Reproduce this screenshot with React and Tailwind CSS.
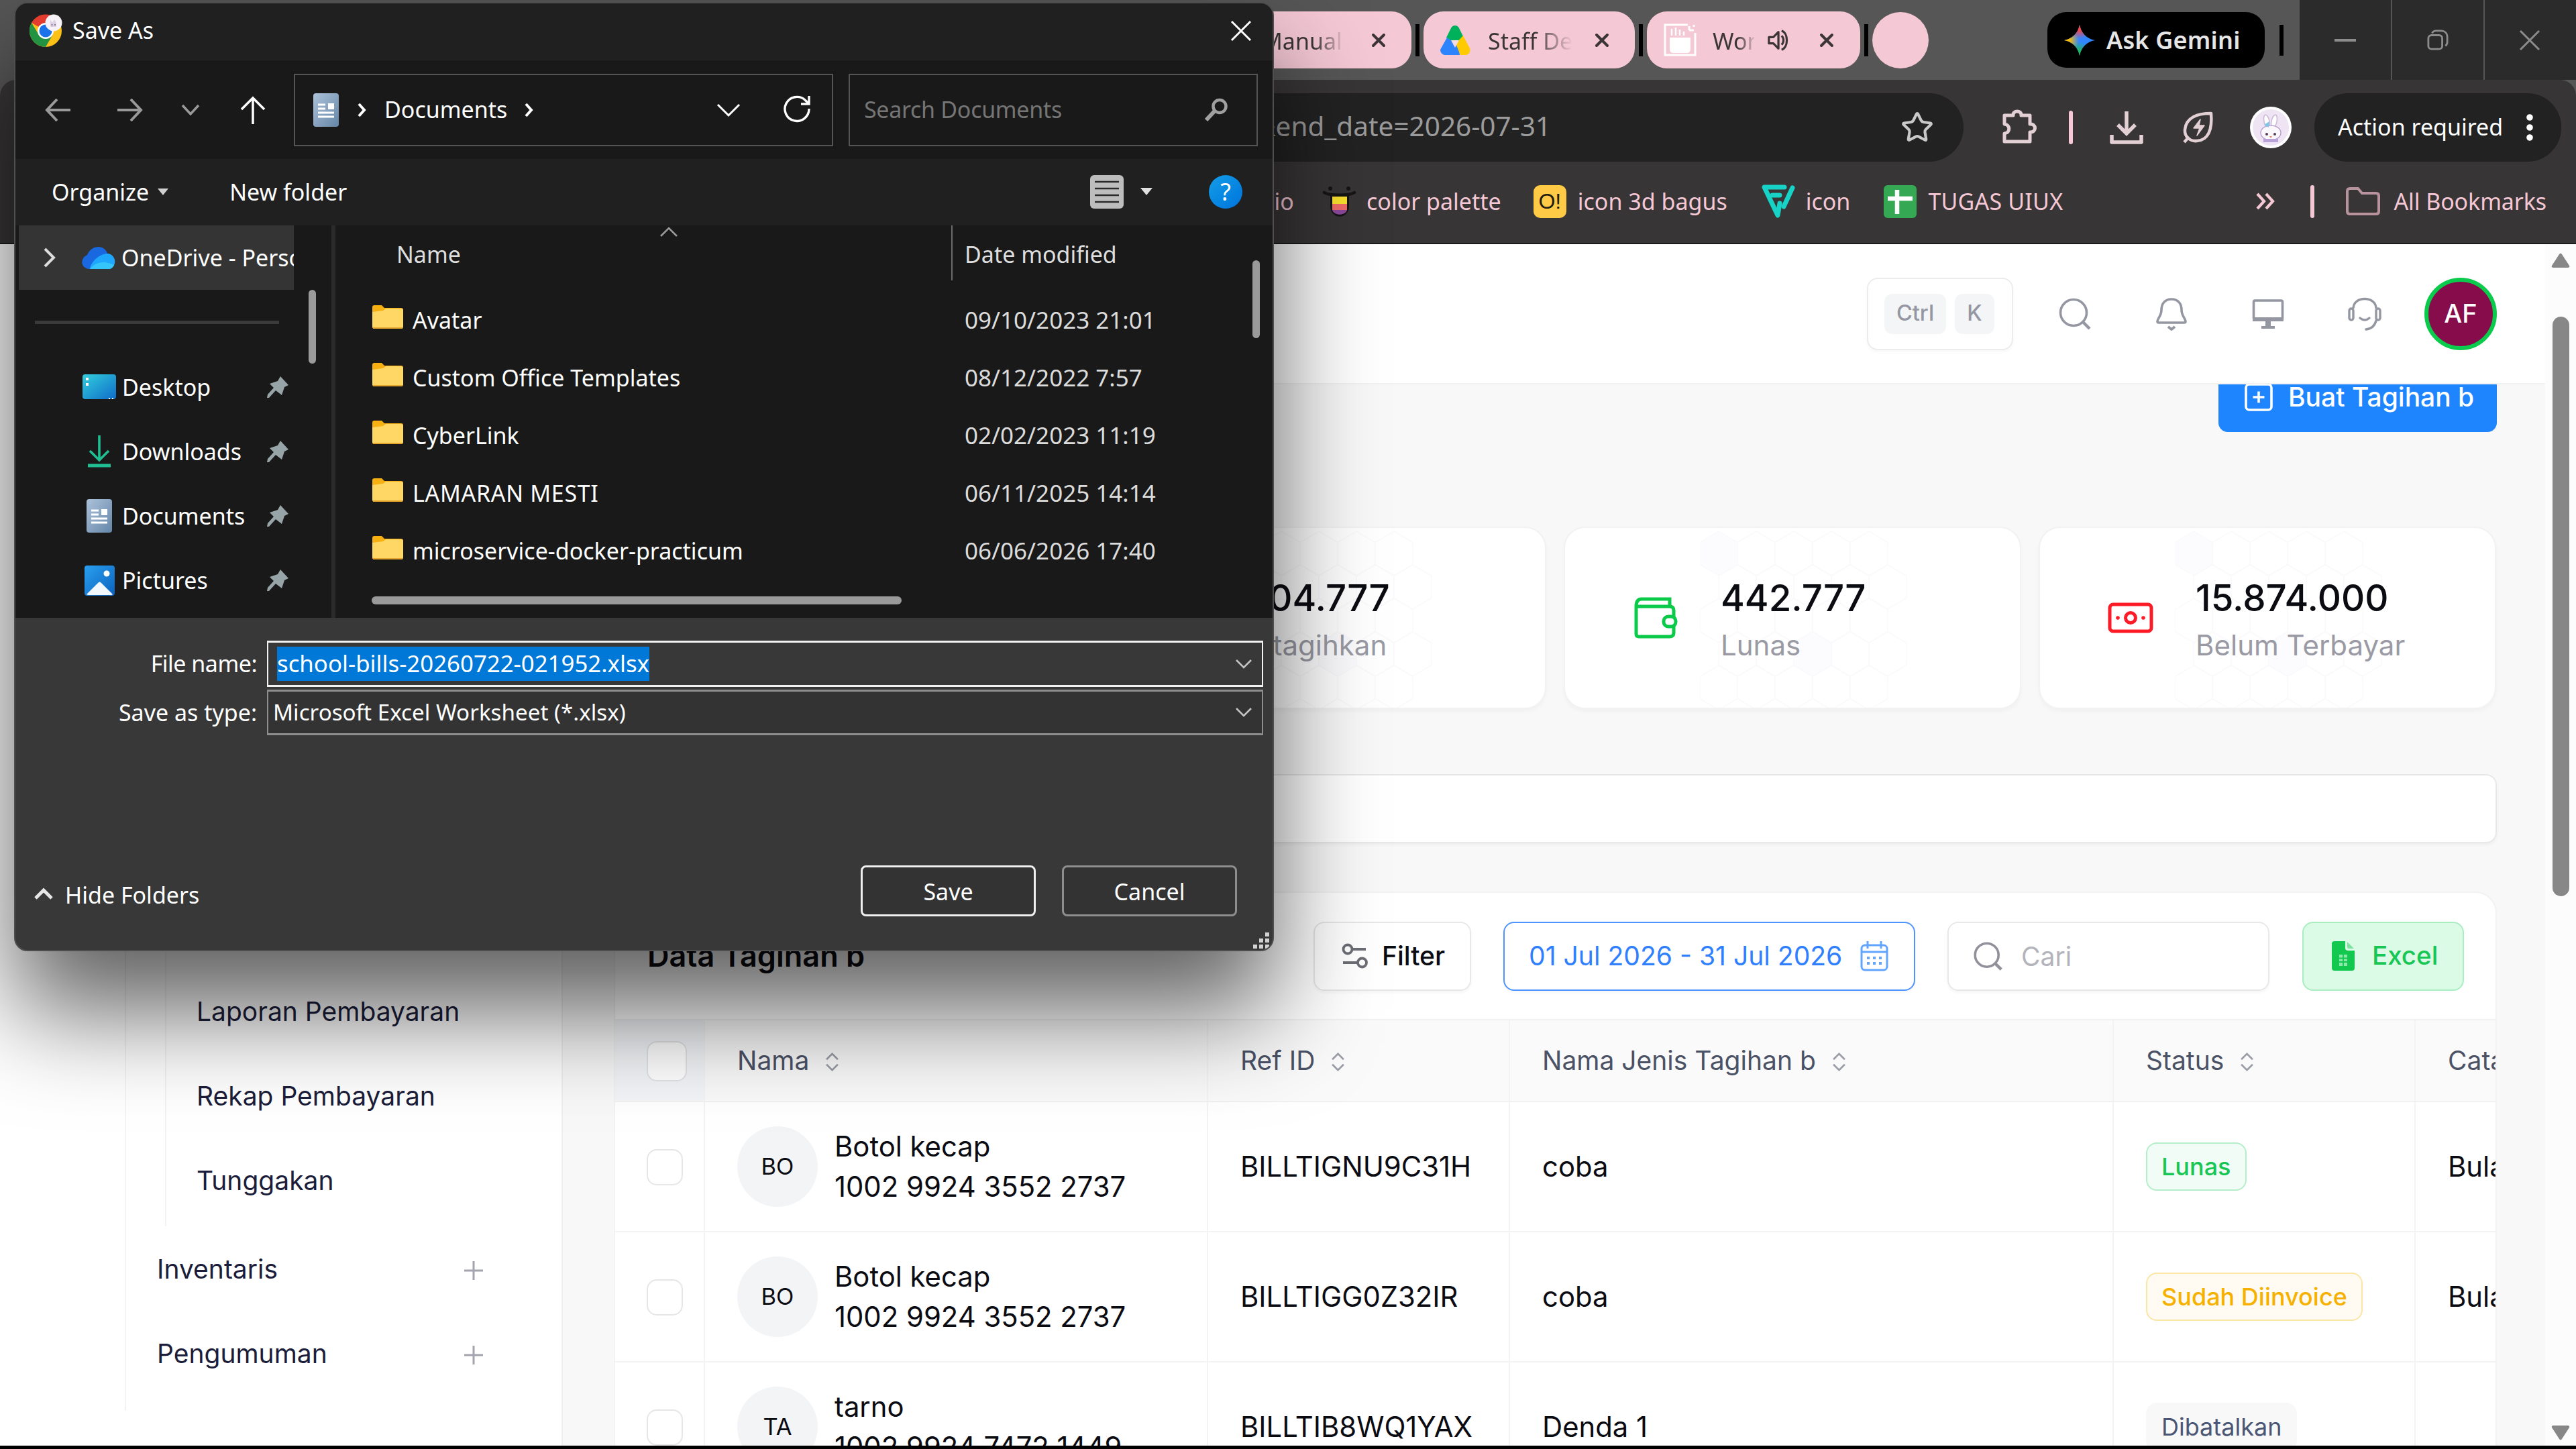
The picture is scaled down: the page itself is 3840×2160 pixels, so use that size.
import { Star, X } from "lucide-react";

const FOLDERS = [
    { name: "Avatar", date: "09/10/2023 21:01" },
    { name: "Custom Office Templates", date: "08/12/2022 7:57" },
    { name: "CyberLink", date: "02/02/2023 11:19" },
    { name: "LAMARAN MESTI", date: "06/11/2025 14:14", tracking: "tracking-[0.7px]" },
    { name: "microservice-docker-practicum", date: "06/06/2026 17:40" },
];

const PINNED = [
    { name: "Desktop", icon: DesktopIcon },
    { name: "Downloads", icon: DownloadsIcon },
    { name: "Documents", icon: DocumentIcon },
    { name: "Pictures", icon: PicturesIcon },
];

const BILLS = [
    { initials: "BO", name: "Botol kecap", va: "1002 9924 3552 2737", ref: "BILLTIGNU9C31H", type: "coba", status: "Lunas", note: "Bulanan" },
    { initials: "BO", name: "Botol kecap", va: "1002 9924 3552 2737", ref: "BILLTIGG0Z32IR", type: "coba", status: "Sudah Diinvoice", note: "Bulanan" },
    { initials: "TA", name: "tarno", va: "1002 9924 7472 1449", ref: "BILLTIB8WQ1YAX", type: "Denda 1", status: "Dibatalkan", note: "" },
];

const STATUS_STYLE = {
    Lunas: "border-[#b5efc9] bg-[#f2fcf6] text-[#17c653] font-medium",
    "Sudah Diinvoice": "border-[#fbe6a6] bg-[#fffbf2] text-[#f6b100] font-medium",
    Dibatalkan: "border-[#f8f8f9] bg-[#f8f8f9] text-[#4b5675]",
};

export default function App() {
    return (
        <div className="relative flex h-[2160px] w-[3840px] flex-col overflow-hidden bg-[#565656] [font-family:'Noto_Sans',sans-serif]">
            <TabStrip />
            <div className="h-[243px] shrink-0 rounded-t-[24px] bg-[#383536]">
                <AddressBar />
                <BookmarksBar />
            </div>
            <div className="h-[2px] shrink-0 bg-[#1c1b1b]" />
            <Page />
            <div className="h-[5px] shrink-0 bg-black" />
            <SaveDialog />
        </div>
    );
}

/* ---------- browser chrome ---------- */

function TabStrip() {
    return (
        <div className="flex h-[119px] shrink-0 items-start justify-between">
            <div className="flex items-center pl-[1780px] pt-[17px] text-[34px] text-[#3b3538]">
                <div className="flex h-[85px] w-[324px] items-center rounded-[30px] bg-[#f4c8d4] pl-[101px]">
                    <span className="mt-1 w-[130px] overflow-hidden whitespace-nowrap [mask-image:linear-gradient(90deg,#000_60%,transparent_95%)]">Manual</span>
                    <X className="ml-[28px] size-[32px]" strokeWidth={3} />
                </div>
                <TabDivider />
                <div className="flex h-[85px] w-[315px] items-center rounded-[30px] bg-[#f4c8d4] pl-[24px]">
                    <DriveIcon />
                    <span className="ml-[26px] mt-1 w-[126px] overflow-hidden whitespace-nowrap [mask-image:linear-gradient(90deg,#000_55%,transparent_100%)]">Staff De</span>
                    <X className="ml-[28px] size-[32px]" strokeWidth={3} />
                </div>
                <TabDivider />
                <div className="flex h-[85px] w-[318px] items-center rounded-[30px] bg-[#f4c8d4] pl-[25px]">
                    <PageIcon />
                    <span className="ml-[23px] mt-1 w-[62px] overflow-hidden whitespace-nowrap [mask-image:linear-gradient(90deg,#000_60%,transparent_105%)]">Wor</span>
                    <svg className="ml-[19px] h-[34px] w-[36px]" viewBox="0 0 36 36" fill="none" stroke="#3b3538" strokeWidth="3.4">
                        <path d="M2 13h7l8-8v26l-8-8H2z" strokeLinejoin="round" />
                        <path d="M22 11c4 3.500 4 10.500 0 14" />
                        <path d="M22 3c11 4 11 26 0 30" />
                    </svg>
                    <X className="ml-[37px] size-[32px]" strokeWidth={3} />
                </div>
                <TabDivider />
                <div className="size-[84px] rounded-full bg-[#f4c8d4]" />
            </div>
            <div className="flex">
                <div className="mt-[18px] flex h-[83px] w-[324px] items-center rounded-[28px] bg-black pl-[25px] text-white">
                    <GeminiIcon />
                    <span className="ml-[17px] whitespace-nowrap text-[36px] font-semibold leading-[81px] tracking-[0.2px] text-[#e6e6e6]">Ask Gemini</span>
                </div>
                <div className="ml-[22px] mr-[24px] mt-[37px] h-[46px] w-[6px] bg-black" />
                <div className="flex h-[119px] w-[412px] bg-[#2b2b2b] text-[#8c8c8c]">
                    <div className="flex w-[138px] items-center justify-center border-r-2 border-[#565656]">
                        <div className="h-[4px] w-[32px] bg-[#8c8c8c]" />
                    </div>
                    <div className="flex w-[138px] items-center justify-center border-r-2 border-[#565656]">
                        <svg className="size-[32px]" viewBox="0 0 34 34" fill="none" stroke="currentColor" strokeWidth="3">
                            <rect x="2" y="9" width="22" height="22" rx="5" />
                            <path d="M8 6c1-2.500 3-4 6-4h8c6 0 10 4 10 10v8c0 3-1 4.500-3 6" />
                        </svg>
                    </div>
                    <div className="flex w-[134px] items-center justify-center">
                        <XMark className="size-[32px]" width={3} />
                    </div>
                </div>
            </div>
        </div>
    );
}

function TabDivider() {
    return <div className="mx-[6px] h-[48px] w-[6px] bg-black" />;
}

function XMark({ className, width }) {
    return (
        <svg className={className} viewBox="0 0 32 32" stroke="currentColor" strokeWidth={width}>
            <path d="M2 2L30 30M30 2L2 30" />
        </svg>
    );
}

function AddressBar() {
    return (
        <div className="flex h-[142px] items-center text-[#e3d0d5]">
            <div className="ml-[400px] flex h-[102px] w-[2527px] items-center justify-end rounded-full bg-[#222222] pr-[44px]">
                <span className="mr-[521px] whitespace-nowrap pb-[3px] text-[40.5px] text-[#9b9b9b]">&amp;end_date=2026-07-31</span>
                <Star className="size-[50px] text-[#c9c9c9]" strokeWidth={2} />
            </div>
            <svg className="ml-[55px] h-[56px] w-[56px]" viewBox="0 0 56 56" fill="none" stroke="currentColor" strokeWidth="5" strokeLinejoin="round">
                <path d="M6 10H19C18 2 32 2 31 10H44V23C54 22 54 36 44 35V49H6V37C15 36 15 24 6 23Z" />
            </svg>
            <div className="ml-[46px] h-[50px] w-[6px] rounded-full bg-[#f4c8d4]" />
            <svg className="ml-[54px] h-[52px] w-[52px]" viewBox="0 0 52 52" fill="none" stroke="currentColor" strokeWidth="5.500">
                <path d="M26 2V34M13 22L26 35L39 22" />
                <path d="M4 37V48H48V37" strokeLinejoin="round" />
            </svg>
            <svg className="ml-[56px] h-[50px] w-[50px]" viewBox="0 0 50 50" fill="none" stroke="currentColor" strokeWidth="4.500" strokeLinejoin="round">
                <path d="M44 4C24 4 7 10 5 28C4 40 14 46 23 45C40 44 46 28 44 4Z" />
                <path d="M11 39L4 47" />
                <path d="M28 13L18 26H27L23 37L34 22H26Z" fill="currentColor" strokeWidth="1.500" />
            </svg>
            <BunnyAvatar />
            <div className="ml-[34px] flex h-[102px] w-[368px] items-center rounded-[50px] bg-[#222222] pl-[35px] text-white">
                <span className="whitespace-nowrap pb-[2px] text-[34px]">Action required</span>
                <svg className="ml-[35px] h-[42px] w-[10px]" viewBox="0 0 10 42" fill="currentColor">
                    <circle cx="5" cy="6" r="4.800" />
                    <circle cx="5" cy="21" r="4.800" />
                    <circle cx="5" cy="36" r="4.800" />
                </svg>
            </div>
        </div>
    );
}

function BookmarksBar() {
    return (
        <div className="flex h-[78px] items-center whitespace-nowrap text-[34px] text-[#f4c8d4]">
            <span className="ml-[1770px] w-[151px] text-right">portofolio</span>
            <svg className="ml-[50px] h-[50px] w-[52px]" viewBox="0 0 52 50">
                <circle cx="12" cy="6" r="3" fill="#161414" />
                <circle cx="39" cy="6" r="3" fill="#161414" />
                <path d="M3 12C10 17 41 17 48 12" stroke="#161414" strokeWidth="4.500" fill="none" strokeLinecap="round" />
                <path d="M12 16H40V32C40 53 12 53 12 32Z" fill="#161414" />
                <path d="M15 18H37V30H15Z" fill="#fbe32d" />
                <path d="M15 29H37V38H15Z" fill="#f46a6a" />
                <path d="M15 38H37C35 47 17 47 15 38Z" fill="#8b4a9c" />
            </svg>
            <span className="ml-[14px]">color palette</span>
            <span className="ml-[48px] flex size-[49px] items-center justify-center rounded-[10px] bg-[#ffca45] [font-family:'Liberation_Sans',sans-serif] text-[32px] text-[#211c12]">O!</span>
            <span className="ml-[17px]">icon 3d bagus</span>
            <svg className="ml-[51px] h-[50px] w-[50px]" viewBox="0 0 50 50" fill="none" stroke="#17d3c7" strokeWidth="7" strokeLinejoin="round" strokeLinecap="round">
                <path d="M34 4H4L24 46L27 28" />
                <path d="M16 16H27" />
                <path d="M46 5L33 33" />
            </svg>
            <span className="ml-[16px]">icon</span>
            <svg className="ml-[50px] h-[49px] w-[49px]" viewBox="0 0 49 49">
                <rect width="49" height="49" rx="6" fill="#34a853" />
                <path d="M20 7V43M6 20H43" stroke="#fff" strokeWidth="6.500" />
            </svg>
            <span className="ml-[17px] tracking-[0.2px]">TUGAS UIUX</span>
            <svg className="ml-auto h-[26px] w-[31px]" viewBox="0 0 31 26" fill="none" stroke="currentColor" strokeWidth="4.200">
                <path d="M3 2L13 13L3 24M16 2L26 13L16 24" />
            </svg>
            <div className="ml-[51px] h-[49px] w-[6px] rounded-full bg-[#f4c8d4]" />
            <svg className="ml-[47px] h-[42px] w-[51px]" viewBox="0 0 51 42" fill="none" stroke="#b8939d" strokeWidth="4">
                <path d="M2 36V6Q2 2 6 2H18L24 9H45Q49 9 49 13V36Q49 40 45 40H6Q2 40 2 36Z" />
            </svg>
            <span className="ml-[20px] mr-[44px] tracking-[-0.1px]">All Bookmarks</span>
        </div>
    );
}

function DriveIcon() {
    return (
        <svg className="h-[46px] w-[46px] shrink-0" viewBox="0 0 46 46">
            <path d="M10 19L17 5Q19 1 23 1T29 5L35 17L27 27L17 24Z" fill="#00b15b" />
            <path d="M11 19L22 26L15 45H7Q1 43 1 37Z" fill="#2d84fc" />
            <path d="M11 45L19 30H28L30 45Z" fill="#2d84fc" />
            <path d="M35 16L45 35Q47 42 40 45H31L24 28Z" fill="#ffcb00" />
            <path d="M17 23H29L23 34Z" fill="#f4dce2" />
        </svg>
    );
}

function PageIcon() {
    return (
        <svg className="h-[50px] w-[50px] shrink-0" viewBox="0 0 50 50" fill="none" stroke="#fff" strokeWidth="3">
            <path d="M36 2H2V47H47V14" />
            <path d="M38 10V4M38 10H45M45 2V5" />
            <path d="M9 21H40V38Q40 44 34 44H15Q9 44 9 38Z" fill="#fff" stroke="none" />
            <path d="M12 8V18M18 6V18M24 9V18M30 12V18" strokeWidth="2.500" />
        </svg>
    );
}

function GeminiIcon() {
    return (
        <svg className="h-[46px] w-[46px] shrink-0" viewBox="0 0 46 46">
            <defs>
                <radialGradient id="gem-red" cx="23" cy="2" r="19" gradientUnits="userSpaceOnUse">
                    <stop offset="0.300" stopColor="#f94543" />
                    <stop offset="1" stopColor="#f94543" stopOpacity="0" />
                </radialGradient>
                <radialGradient id="gem-yellow" cx="2" cy="23" r="20" gradientUnits="userSpaceOnUse">
                    <stop offset="0.300" stopColor="#fbbc04" />
                    <stop offset="1" stopColor="#fbbc04" stopOpacity="0" />
                </radialGradient>
                <radialGradient id="gem-green" cx="21" cy="45" r="20" gradientUnits="userSpaceOnUse">
                    <stop offset="0.300" stopColor="#1fb75a" />
                    <stop offset="1" stopColor="#1fb75a" stopOpacity="0" />
                </radialGradient>
            </defs>
            {["#3186ff", "url(#gem-green)", "url(#gem-yellow)", "url(#gem-red)"].map((fill) => (
                <path key={fill} fill={fill} d="M23 0C25 12 34 21 46 23C34 25 25 34 23 46C21 34 12 25 0 23C12 21 21 12 23 0Z" />
            ))}
        </svg>
    );
}

function BunnyAvatar() {
    return (
        <svg className="ml-[52px] size-[62px]" viewBox="0 0 62 62">
            <circle cx="31" cy="31" r="31" fill="#fff" />
            <circle cx="31" cy="31" r="27" fill="#eee4f3" />
            <ellipse cx="25" cy="22" rx="4" ry="10" fill="#fff" stroke="#cbb8d8" strokeWidth="1.500" transform="rotate(-12 25 22)" />
            <ellipse cx="36" cy="22" rx="4" ry="10" fill="#fff" stroke="#cbb8d8" strokeWidth="1.500" transform="rotate(12 36 22)" />
            <ellipse cx="31" cy="39" rx="15" ry="11" fill="#fbf8fd" stroke="#bca6d6" strokeWidth="1.500" />
            <circle cx="25" cy="41" r="2" fill="#54405e" />
            <circle cx="37" cy="41" r="2" fill="#54405e" />
            <path d="M29 44H33L31 47Z" fill="#e8876e" />
            <path d="M21 27L29 22L28 31Z" fill="#7cc6e6" />
            <path d="M20 48H42V53H20Z" fill="#b9a3d8" />
        </svg>
    );
}

/* ---------- page ---------- */

function Page() {
    return (
        <div className="flex min-h-0 flex-1 overflow-hidden bg-white text-[#0b0b12] [font-family:Inter,sans-serif]">
            <Sidebar />
            <div className="flex w-[2955px] flex-col bg-[#f8f8f8]">
                <Header />
                <main className="flex min-h-0 flex-1 flex-col overflow-hidden pl-[76px] pr-[72px]">
                    <div className="flex shrink-0 justify-end">
                        <div className="flex h-[71px] w-[415px] items-center rounded-b-[14px] bg-[#1f85ff] pb-[34px] pl-[39px] text-white">
                            <svg className="h-[42px] w-[42px] shrink-0" viewBox="0 0 42 42" fill="none" stroke="#fff" strokeWidth="3.600">
                                <rect x="2" y="2" width="38" height="38" rx="5" />
                                <path d="M21 12.500V29.500M12.500 21H29.500" />
                            </svg>
                            <span className="ml-[23px] whitespace-nowrap text-[39px] font-medium leading-[48px]">Buat Tagihan b</span>
                        </div>
                    </div>
                    <div className="mt-[141px] flex shrink-0 gap-[26px]">
                        <StatCard icon={<WalletIcon />} value="16" label="Jumlah" />
                        <StatCard icon={<WalletIcon />} value="304.777" label="Ditagihkan" />
                        <StatCard icon={<WalletIcon />} value="442.777" label="Lunas" />
                        <StatCard icon={<CashIcon />} value="15.874.000" label="Belum Terbayar" />
                    </div>
                    <div className="mt-[97px] h-[103px] shrink-0 rounded-[16px] border-2 border-[#e8e8e8] bg-white shadow-[0_3px_4px_rgba(0,0,0,0.04)]" />
                    <BillTable />
                </main>
            </div>
            <div className="flex w-[46px] flex-col items-center bg-[#fcfcfc] pt-[13px]">
                <svg className="h-[22px] w-[28px] shrink-0" viewBox="0 0 28 22" fill="#878787"><path d="M12 2Q14 -1 16 2L27 19Q28 22 25 22H3Q0 22 1 19Z" /></svg>
                <div className="mt-[73px] h-[864px] w-[25px] shrink-0 rounded-full bg-[#878787]" />
                <svg className="mb-[8px] mt-auto h-[22px] w-[28px] shrink-0" viewBox="0 0 28 22" fill="#878787"><path d="M12 20Q14 23 16 20L27 3Q28 0 25 0H3Q0 0 1 3Z" /></svg>
            </div>
        </div>
    );
}

function Sidebar() {
    return (
        <div className="w-[839px] shrink-0 border-r-2 border-[#f0f0f0] bg-white pl-[186px] pt-[800px] text-[39px] text-[#1b1d3a]">
            <div className="h-[939px] border-l-2 border-[#f3f3f3]">
                <div className="ml-[58px] flex h-[664px] flex-col justify-end border-l-2 border-[#f3f3f3] pb-[5px] pl-[45px]">
                    <span className="flex h-[126px] items-center">Laporan Pembayaran</span>
                    <span className="flex h-[126px] items-center">Rekap Pembayaran</span>
                    <span className="flex h-[126px] items-center">Tunggakan</span>
                </div>
                <SidebarGroup label="Inventaris" />
                <SidebarGroup label="Pengumuman" />
            </div>
        </div>
    );
}

function SidebarGroup({ label }) {
    return (
        <div className="flex h-[126px] w-[532px] items-center justify-between pl-[46px] pt-[2px]">
            <span>{label}</span>
            <svg className="mt-[3px] size-[28px]" viewBox="0 0 28 28" stroke="#a3a4ad" strokeWidth="3"><path d="M14 0V28M0 14H28" /></svg>
        </div>
    );
}

function Header() {
    return (
        <div className="flex h-[209px] shrink-0 items-center justify-end border-b-2 border-[#f1f1f1] bg-white pr-[72px] text-[#9496a1]">
            <div className="flex h-[108px] w-[218px] items-center gap-[13px] rounded-[16px] border-2 border-[#ececec] pl-[24px] shadow-[0_3px_4px_rgba(0,0,0,0.03)]">
                <span className="flex h-[60px] w-[92px] items-center justify-center rounded-[12px] bg-[#f3f5f7] text-[32.500px] font-medium">Ctrl</span>
                <span className="flex h-[60px] w-[59px] items-center justify-center rounded-[12px] bg-[#f3f5f7] text-[32.500px] font-medium">K</span>
            </div>
            <svg className="ml-[68px] size-[48px]" viewBox="0 0 48 48" fill="none" stroke="currentColor" strokeWidth="3.600">
                <circle cx="22" cy="22" r="19.500" />
                <path d="M36 36L46 46" strokeWidth="4.500" />
            </svg>
            <svg className="ml-[96px] h-[50px] w-[48px]" viewBox="0 0 48 50" fill="none" stroke="currentColor" strokeWidth="3.600" strokeLinejoin="round">
                <path d="M24 3C13 3 9 11 9 19C9 28 3 32 3 36Q3 38 5 38H43Q45 38 45 36C45 32 39 28 39 19C39 11 35 3 24 3Z" />
                <path d="M19 44L24 48L29 44" strokeWidth="4" />
            </svg>
            <svg className="ml-[96px] h-[46px] w-[48px]" viewBox="0 0 48 46" fill="none" stroke="currentColor">
                <rect x="2.500" y="3" width="43" height="28" rx="2" strokeWidth="3.600" />
                <path d="M1 28H47V34H1Z" fill="currentColor" stroke="none" />
                <path d="M20 33H28V41H34V45H14V41H20Z" fill="currentColor" stroke="none" />
            </svg>
            <svg className="ml-[95px] h-[50px] w-[50px]" viewBox="0 0 50 50" fill="none" stroke="currentColor" strokeWidth="3.400" strokeLinecap="round">
                <path d="M8 16C9 -2 41 -2 42 16" />
                <rect x="2" y="17" width="6" height="17" rx="3" />
                <rect x="42" y="17" width="6" height="17" rx="3" />
                <path d="M18 31Q25 37 32 31" />
                <path d="M42 35C40 43 35 47 27 48" />
            </svg>
            <div className="ml-[64px] flex size-[108px] items-center justify-center rounded-full border-[6px] border-[#0acb4b] bg-[#870c4b] text-[38px] font-medium text-white">AF</div>
        </div>
    );
}

function StatCard({ icon, value, label }) {
    return (
        <div className="flex h-[272px] w-[682px] shrink-0 items-center rounded-[32px] border-2 border-[#f2f2f2] bg-white shadow-[0_4px_6px_rgba(0,0,0,0.03)]">
            <div className="ml-[97px] flex h-full w-[76px] items-center justify-center">{icon}</div>
            <div className="relative flex h-full flex-1 flex-col pl-[59px] pt-[71px]">
                <Honeycomb />
                <span className="relative whitespace-nowrap text-[54.600px] font-medium leading-[66px]">{value}</span>
                <span className="relative mt-[9px] whitespace-nowrap text-[42px] leading-[58px] text-[#9a9aa4]">{label}</span>
            </div>
        </div>
    );
}

function Honeycomb() {
    const cells = [];
    for (let row = 0; row < 5; row++) {
        for (let col = 0; col < 5; col++) {
            cells.push({ x: 28 + col * 56 + (row % 2) * 28, y: 34 + row * 50, filled: (row === 0 && col === 0) || (row === 3 && col === 2) });
        }
    }
    return (
        <svg className="absolute left-[28px] top-[4px] h-[264px] w-[330px]" viewBox="0 0 330 264" fill="none" stroke="#fafafc" strokeWidth="1.500">
            {cells.map(({ x, y, filled }) => (
                <path key={x + "-" + y} d={`M${x} ${y - 33}l28 16.500v33l-28 16.500l-28 -16.500v-33z`} fill={filled ? "#fcfcfe" : "none"} />
            ))}
        </svg>
    );
}

function WalletIcon() {
    return (
        <svg className="h-[62px] w-[66px]" viewBox="0 0 66 62" fill="none" stroke="#0bca4a" strokeWidth="5">
            <path d="M4 14Q4 3 12 3H54V14" />
            <path d="M4 14V55Q4 59 8 59H54Q60 59 60 53V20Q60 14 54 14H4" />
            <rect x="45" y="29" width="18" height="15" rx="7" fill="#fff" />
        </svg>
    );
}

function CashIcon() {
    return (
        <svg className="h-[46px] w-[68px]" viewBox="0 0 68 46" fill="none" stroke="#fc1c27" strokeWidth="5">
            <rect x="3" y="3" width="62" height="40" rx="5" />
            <circle cx="34" cy="23" r="7.500" />
            <circle cx="15" cy="23" r="2.800" fill="#fc1c27" stroke="none" />
            <circle cx="53" cy="23" r="2.800" fill="#fc1c27" stroke="none" />
        </svg>
    );
}

function BillTable() {
    return (
        <div className="mt-[72px] h-[900px] shrink-0 overflow-hidden rounded-t-[32px] border-2 border-[#f2f2f2] bg-white">
            <div className="flex h-[188px] items-center pl-[48px] pr-[47px]">
                <span className="whitespace-nowrap text-[45px] font-semibold">Data Tagihan b</span>
                <button className="ml-auto flex h-[103px] w-[235px] items-center rounded-[16px] border-2 border-[#e8e8e8] pl-[40px] shadow-[0_3px_4px_rgba(0,0,0,0.04)]">
                    <svg className="h-[38px] w-[40px]" viewBox="0 0 40 38" fill="none" stroke="#6c6d75" strokeWidth="3.800">
                        <circle cx="9" cy="9" r="6.500" />
                        <path d="M16 9H36M2 29H24" />
                        <circle cx="30.500" cy="29" r="6.500" />
                    </svg>
                    <span className="ml-[20px] text-[39px] font-medium">Filter</span>
                </button>
                <button className="ml-[48px] flex h-[103px] w-[614px] items-center rounded-[16px] border-2 border-[#4d94ff] pl-[36px] text-[#2f7fff] shadow-[0_3px_4px_rgba(0,0,0,0.03)]">
                    <span className="whitespace-nowrap text-[39.100px]">01 Jul 2026 - 31 Jul 2026</span>
                    <CalendarIcon />
                </button>
                <div className="ml-[48px] flex h-[103px] w-[480px] items-center rounded-[16px] border-2 border-[#e8e8e8] pl-[37px] text-[#8f909a] shadow-[0_3px_4px_rgba(0,0,0,0.04)]">
                    <svg className="size-[43px]" viewBox="0 0 48 48" fill="none" stroke="currentColor" strokeWidth="4">
                        <circle cx="22" cy="22" r="19.500" />
                        <path d="M36 36L46 46" strokeWidth="5" />
                    </svg>
                    <span className="ml-[28px] pt-[2px] text-[39px] text-[#b3b3bb]">Cari</span>
                </div>
                <button className="ml-[49px] flex h-[103px] w-[241px] items-center rounded-[16px] border-2 border-[#a9edc1] bg-[#dcfbe7] pl-[41px] text-[#17c653]">
                    <svg className="h-[44px] w-[36px]" viewBox="0 0 36 44">
                        <path d="M5 0H21V10Q21 14 25 14H35V40Q35 44 31 44H5Q1 44 1 40V4Q1 0 5 0Z" fill="#12c84f" />
                        <path d="M24 1L34 11H26Q24 11 24 9Z" fill="#7fe3a0" />
                        <path d="M12 20H24V37H12Z" fill="#8be8a9" />
                        <path d="M18 20V37M12 25.500H24M12 31H24" stroke="#12c84f" strokeWidth="1.800" />
                    </svg>
                    <span className="ml-[25px] text-[38.500px] font-medium">Excel</span>
                </button>
            </div>
            <div className="grid h-[124px] grid-cols-[134px_750px_450px_900px_450px_300px] border-y-2 border-[#f1f1f1] bg-[#fafafa] text-[39px] text-[#4b5266]">
                <div className="flex items-center border-r-2 border-[#f3f3f3] bg-[#f3f5f8] pl-[47px] pt-[2px]">
                    <span className="size-[60px] rounded-[15px] border-2 border-[#e2e3e6] bg-white" />
                </div>
                <HeadCell label="Nama" />
                <HeadCell label="Ref ID" />
                <HeadCell label="Nama Jenis Tagihan b" />
                <HeadCell label="Status" />
                <div className="flex items-center pl-[48px]">Catatan</div>
            </div>
            {BILLS.map((bill, i) => (
                <div key={i} className="grid h-[194px] grid-cols-[134px_750px_450px_900px_450px_300px] border-b-2 border-[#f3f3f3] text-[41.8px]">
                    <div className="flex items-center border-r-2 border-[#f3f3f3] pl-[47px] pt-[2px]">
                        <span className="size-[54px] rounded-[15px] border-2 border-[#e6e6e8] bg-white" />
                    </div>
                    <div className="flex items-center border-r-2 border-[#f3f3f3] pl-[48px]">
                        <span className="flex size-[120px] items-center justify-center rounded-full bg-[#f2f4f6] text-[34.5px]">{bill.initials}</span>
                        <span className="ml-[25px] flex flex-col leading-[60px]">
                            <span>{bill.name}</span>
                            <span className="whitespace-nowrap">{bill.va}</span>
                        </span>
                    </div>
                    <div className="flex items-center border-r-2 border-[#f3f3f3] pl-[48px]">{bill.ref}</div>
                    <div className="flex items-center border-r-2 border-[#f3f3f3] pl-[48px]">{bill.type}</div>
                    <div className="flex items-center border-r-2 border-[#f3f3f3] pl-[48px]">
                        <span className={`flex h-[72px] items-center whitespace-nowrap rounded-[16px] border-2 px-[21px] text-[36px] ${STATUS_STYLE[bill.status]}`}>{bill.status}</span>
                    </div>
                    <div className="flex items-center pl-[48px]">{bill.note}</div>
                </div>
            ))}
        </div>
    );
}

function HeadCell({ label }) {
    return (
        <div className="flex items-center border-r-2 border-[#f3f3f3] pl-[48px]">
            <span className="whitespace-nowrap">{label}</span>
            <svg className="ml-[24px] mt-[3px] h-[28px] w-[21px]" viewBox="0 0 22 30" fill="none" stroke="#9a9da8" strokeWidth="2.800">
                <path d="M2 11L11 2L20 11M2 19L11 28L20 19" />
            </svg>
        </div>
    );
}

function CalendarIcon() {
    return (
        <svg className="ml-[27px] h-[46px] w-[42px]" viewBox="0 0 42 46" fill="none" stroke="#61a5ff" strokeWidth="3">
            <rect x="2" y="7" width="38" height="37" rx="5" />
            <path d="M2 17H40M11 1V12M31 1V12" />
            <path d="M10 26H32M10 34H32" strokeWidth="4" strokeDasharray="4 5" />
        </svg>
    );
}

/* ---------- save dialog ---------- */

function SaveDialog() {
    return (
        <div className="absolute left-[21px] top-[3px] flex h-[1415px] w-[1878px] flex-col overflow-hidden rounded-[20px] border-2 border-[#4e4e4e] bg-[#383838] text-[34px] text-white shadow-[0_90px_150px_rgba(0,0,0,0.62)]">
            <div className="flex h-[85px] shrink-0 items-center bg-[#202020] pb-[4px] pl-[20px] pr-[31px]">
                <ChromeIcon />
                <span className="ml-[15px]">Save As</span>
                <XMark className="ml-auto size-[32px]" width={3} />
            </div>
            <DialogNav />
            <DialogToolbar />
            <div className="flex h-[585px] shrink-0 bg-[#191919]">
                <DialogTree />
                <DialogFiles />
            </div>
            <DialogForm />
        </div>
    );
}

function DialogNav() {
    return (
        <div className="flex h-[147px] shrink-0 items-center bg-[#191919]">
            <svg className="ml-[44px] h-[40px] w-[40px]" viewBox="0 0 40 40" fill="none" stroke="#9a9a9a" strokeWidth="4"><path d="M38 20H4M18 4L3 20L18 36" /></svg>
            <svg className="ml-[66px] h-[40px] w-[40px]" viewBox="0 0 40 40" fill="none" stroke="#9a9a9a" strokeWidth="4"><path d="M2 20H36M22 4L37 20L22 36" /></svg>
            <svg className="ml-[57px] h-[20px] w-[28px]" viewBox="0 0 28 20" fill="none" stroke="#9a9a9a" strokeWidth="3.500"><path d="M2 3L14 16L26 3" /></svg>
            <svg className="ml-[59px] h-[42px] w-[40px]" viewBox="0 0 40 42" fill="none" stroke="#fff" strokeWidth="3.500"><path d="M20 42V4M3 20L20 3L37 20" /></svg>
            <div className="ml-[41px] flex h-[108px] w-[804px] items-center border-2 border-[#555555] pl-[27px]">
                <DocumentIcon />
                <Chevron className="ml-[27px]" />
                <span className="ml-[26px]">Documents</span>
                <Chevron className="ml-[25px]" />
                <svg className="ml-auto h-[22px] w-[36px]" viewBox="0 0 36 22" fill="none" stroke="#fff" strokeWidth="3"><path d="M2 3L18 19L34 3" /></svg>
                <svg className="ml-[63px] mr-[31px] mt-[-4px] h-[42px] w-[42px]" viewBox="0 0 42 42" fill="none" stroke="#fff" strokeWidth="3.400">
                    <path d="M39 21A18 18 0 1 1 33 8L38 13" />
                    <path d="M39 2V14H27" />
                </svg>
            </div>
            <div className="ml-[23px] flex h-[108px] w-[610px] items-center justify-between border-2 border-[#555555] pl-[21px] pr-[42px] text-[#757575]">
                <span className="tracking-[-0.300px]">Search Documents</span>
                <svg className="h-[36px] w-[36px]" viewBox="0 0 36 36" fill="none" stroke="#a0a0a0" strokeWidth="4.500">
                    <circle cx="23" cy="12.500" r="9.500" />
                    <path d="M16 19L3 33" strokeWidth="6" />
                </svg>
            </div>
        </div>
    );
}

function Chevron({ className }) {
    return (
        <svg className={`h-[22px] w-[15px] ${className}`} viewBox="0 0 15 22" fill="none" stroke="#fff" strokeWidth="4">
            <path d="M3 2L11 11L3 20" />
        </svg>
    );
}

function DialogToolbar() {
    return (
        <div className="flex h-[99px] shrink-0 items-center bg-[#202020] pb-[2px]">
            <span className="ml-[54px] mt-[2px]">Organize</span>
            <div className="ml-[13px] h-0 w-0 border-x-[8px] border-t-[10px] border-x-transparent border-t-[#d0d0d0]" />
            <span className="ml-[91px] mt-[2px]">New folder</span>
            <svg className="ml-auto h-[50px] w-[50px]" viewBox="0 0 50 50">
                <rect width="50" height="50" rx="6" fill="#bdbdbd" />
                <path d="M7 10H43M7 20H43M7 30H43M7 40H43" stroke="#2a2a2a" strokeWidth="2.600" />
            </svg>
            <div className="ml-[25px] h-0 w-0 border-x-[9px] border-t-[11px] border-x-transparent border-t-[#e0e0e0]" />
            <span className="ml-[84px] mr-[45px] flex size-[50px] items-center justify-center rounded-full bg-linear-to-br from-[#159de8] to-[#0273dc] text-[36px]">?</span>
        </div>
    );
}

function DialogTree() {
    return (
        <div className="relative w-[477px] shrink-0 border-r-[6px] border-[#2b2b2b] pl-[5px]">
            <div className="flex h-[96px] w-[410px] items-center overflow-hidden bg-[#343434] pl-[36px]">
                <svg className="h-[30px] w-[20px] shrink-0" viewBox="0 0 20 30" fill="none" stroke="#ddd" strokeWidth="4"><path d="M3 2L16 15L3 28" /></svg>
                <svg className="ml-[38px] h-[36px] w-[50px] shrink-0" viewBox="0 0 50 36">
                    <path d="M10 35C-2 33 -3 19 8 14C13 0 32 -3 38 11L25 35Z" fill="#1a68e0" />
                    <path d="M12 35C14 22 28 12 39 12C52 14 53 33 40 35Z" fill="#1ea7fd" />
                    <path d="M12 35C20 24 34 22 48 29C46 33 44 35 40 35Z" fill="#35c5fb" />
                </svg>
                <span className="ml-[9px] whitespace-nowrap">OneDrive - Personal</span>
            </div>
            <div className="flex h-[97px] items-center pl-[24px]">
                <div className="h-[5px] w-[364px] bg-[#3a3a3a]" />
            </div>
            {PINNED.map(({ name, icon: Icon }) => (
                <div key={name} className="flex h-[96px] items-center pl-[90px]">
                    <span className="flex w-[60px] justify-center"><Icon /></span>
                    <span className="ml-[4px] w-[215px]">{name}</span>
                    <svg className="h-[34px] w-[34px]" viewBox="0 0 34 34" fill="#98a5a8">
                        <path d="M21 1L33 14L27 17L23 29L14 22L4 33L1 33L2 28L11 18L5 12L17 8Z" />
                    </svg>
                </div>
            ))}
            <div className="absolute right-[23px] top-[96px] h-[110px] w-[11px] rounded-full bg-[#9a9a9a]" />
        </div>
    );
}

function DialogFiles() {
    return (
        <div className="relative flex-1 pl-[55px]">
            <div className="flex h-[98px]">
                <div className="relative w-[863px] pl-[36px] text-[#dedede]">
                    <span className="leading-[87px]">Name</span>
                    <svg className="absolute left-[428px] top-[2px] h-[15px] w-[28px]" viewBox="0 0 28 15" fill="none" stroke="#9a9a9a" strokeWidth="2.600"><path d="M2 14L14 2L26 14" /></svg>
                </div>
                <div className="h-[82px] border-l-2 border-[#6a6a6a] pl-[18px] text-[#dedede]">
                    <span className="leading-[87px]">Date modified</span>
                </div>
            </div>
            {FOLDERS.map((folder) => (
                <div key={folder.name} className="flex h-[86px] items-center">
                    <FolderIcon />
                    <span className={`ml-[14px] w-[823px] whitespace-nowrap ${folder.tracking || ""}`}>{folder.name}</span>
                    <span className="whitespace-nowrap text-[35px] text-[#dcdcdc]">{folder.date}</span>
                </div>
            ))}
            <div className="ml-[-1px] mt-[25px] h-[12px] w-[790px] rounded-full bg-[#9a9a9a]" />
            <div className="absolute right-[19px] top-[52px] h-[116px] w-[11px] rounded-full bg-[#9a9a9a]" />
        </div>
    );
}

function DialogForm() {
    return (
        <div className="relative flex flex-1 flex-col pt-[34px]">
            <div className="flex items-center">
                <span className="w-[360px] text-right tracking-[-0.500px]">File name:</span>
                <div className="ml-[15px] flex h-[69px] w-[1485px] items-center border-2 border-y-[3px] border-[#f2f2f2] bg-[#383838] pl-[13px]">
                    <span className="flex h-[51px] w-[555px] items-center whitespace-nowrap bg-[#0078d7] text-[34.800px]">school-bills-20260722-021952.xlsx</span>
                    <ComboArrow />
                </div>
            </div>
            <div className="mt-[4px] flex items-center">
                <span className="w-[360px] text-right">Save as type:</span>
                <div className="ml-[15px] flex h-[68px] w-[1485px] items-center border-2 border-y-[3px] border-[#8e8e8e] bg-[#333333] pl-[7px]">
                    <span className="whitespace-nowrap text-[33.200px]">Microsoft Excel Worksheet (*.xlsx)</span>
                    <ComboArrow />
                </div>
            </div>
            <div className="mt-[194px] flex items-center">
                <svg className="ml-[28px] mt-[8px] h-[18px] w-[28px]" viewBox="0 0 28 18" fill="none" stroke="#e6e6e6" strokeWidth="5"><path d="M2 16L14 4L26 16" /></svg>
                <span className="ml-[18px] mt-[12px]">Hide Folders</span>
                <button className="ml-auto flex h-[76px] w-[261px] items-center justify-center rounded-[8px] border-[3px] border-[#f0f0f0] bg-[#333333] pt-[2px]">Save</button>
                <button className="ml-[39px] mr-[53px] flex h-[76px] w-[261px] items-center justify-center rounded-[8px] border-[3px] border-[#8e8e8e] bg-[#333333] pt-[2px]">Cancel</button>
            </div>
            <svg className="absolute bottom-[1px] right-[4px] size-[25px]" viewBox="0 0 25 25" fill="#d2d2d2">
                <path d="M18 0H24V6H18ZM18 9H24V15H18ZM18 18H24V24H18ZM9 9H15V15H9ZM9 18H15V24H9ZM0 18H6V24H0Z" />
            </svg>
        </div>
    );
}

function ComboArrow() {
    return (
        <svg className="ml-auto mr-[15px] h-[14px] w-[24px]" viewBox="0 0 24 14" fill="none" stroke="#c4c4c4" strokeWidth="2.600">
            <path d="M1 1L12 12L23 1" />
        </svg>
    );
}

function ChromeIcon() {
    return (
        <svg className="size-[50px]" viewBox="0 0 50 50">
            <circle cx="25" cy="25" r="24" fill="#fbc116" />
            <path d="M25 25L4 13A24 24 0 0 1 46 13H25Z" fill="#e33b2e" />
            <path d="M4 13A24 24 0 0 0 25 49L36 30L25 25L15 31Z" fill="#229342" />
            <circle cx="25" cy="25" r="12" fill="#fff" />
            <circle cx="25" cy="25" r="9.500" fill="#1a73e8" />
            <circle cx="37" cy="13" r="12.500" fill="#f6f2f8" />
            <path d="M32 8L35 13L38 8L41 13V19H32Z" fill="#dcd2e4" />
            <circle cx="34.500" cy="16" r="1" fill="#6d5a78" />
            <circle cx="39" cy="16" r="1" fill="#6d5a78" />
        </svg>
    );
}

function FolderIcon() {
    return (
        <svg className="mt-[-8px] h-[36px] w-[46px] shrink-0" viewBox="0 0 46 36">
            <path d="M0 3Q0 0 3 0H14L18 4H43Q46 4 46 7V20H0Z" fill="#f6b011" />
            <path d="M0 10L16 8L20 5H43Q46 5 46 8V32Q46 35 43 35H3Q0 35 0 32Z" fill="#ffd765" />
            <path d="M1 34H45" stroke="#e5a52c" strokeWidth="2" />
        </svg>
    );
}

function DesktopIcon() {
    return (
        <svg className="h-[38px] w-[50px]" viewBox="0 0 50 38">
            <defs>
                <linearGradient id="desk" x1="0" y1="0" x2="1" y2="1">
                    <stop stopColor="#33cfdd" />
                    <stop offset="1" stopColor="#0f6cc8" />
                </linearGradient>
            </defs>
            <rect width="50" height="37" rx="4" fill="url(#desk)" />
            <path d="M5 5H9V9H5ZM5 13H9V17H5Z" fill="#fff" />
            <path d="M39 35H41V37H39ZM44 35H46V37H44Z" fill="#fff" />
        </svg>
    );
}

function DownloadsIcon() {
    return (
        <svg className="h-[48px] w-[36px]" viewBox="0 0 36 48" fill="none" stroke="#1fbf93" strokeWidth="3.600">
            <path d="M18 0V37M4 23L18 37L32 23" />
            <path d="M1 45H35" strokeWidth="5" />
        </svg>
    );
}

function DocumentIcon() {
    return (
        <svg className="h-[50px] w-[38px]" viewBox="0 0 38 50">
            <defs>
                <linearGradient id="doc" x1="0" y1="0" x2="1" y2="1">
                    <stop stopColor="#adc2da" />
                    <stop offset="1" stopColor="#6586a8" />
                </linearGradient>
            </defs>
            <rect width="38" height="50" rx="4" fill="url(#doc)" />
            <path d="M7 17H18M7 23H18M7 29H31M7 35H31" stroke="#fff" strokeWidth="2.800" />
            <rect x="22" y="15" width="9" height="9" fill="#fff" />
        </svg>
    );
}

function PicturesIcon() {
    return (
        <svg className="h-[45px] w-[45px]" viewBox="0 0 45 45">
            <defs>
                <linearGradient id="pic" x1="0" y1="0" x2="1" y2="1">
                    <stop stopColor="#2a9ff0" />
                    <stop offset="1" stopColor="#0b62bd" />
                </linearGradient>
            </defs>
            <rect width="45" height="45" rx="4" fill="url(#pic)" />
            <path d="M3 43L20 26Q22.500 23 25 26L42 43Q40 45 38 44H6Q4 44 3 43Z" fill="#f2f8ff" />
            <circle cx="33" cy="12" r="4.500" fill="#fff" />
        </svg>
    );
}
